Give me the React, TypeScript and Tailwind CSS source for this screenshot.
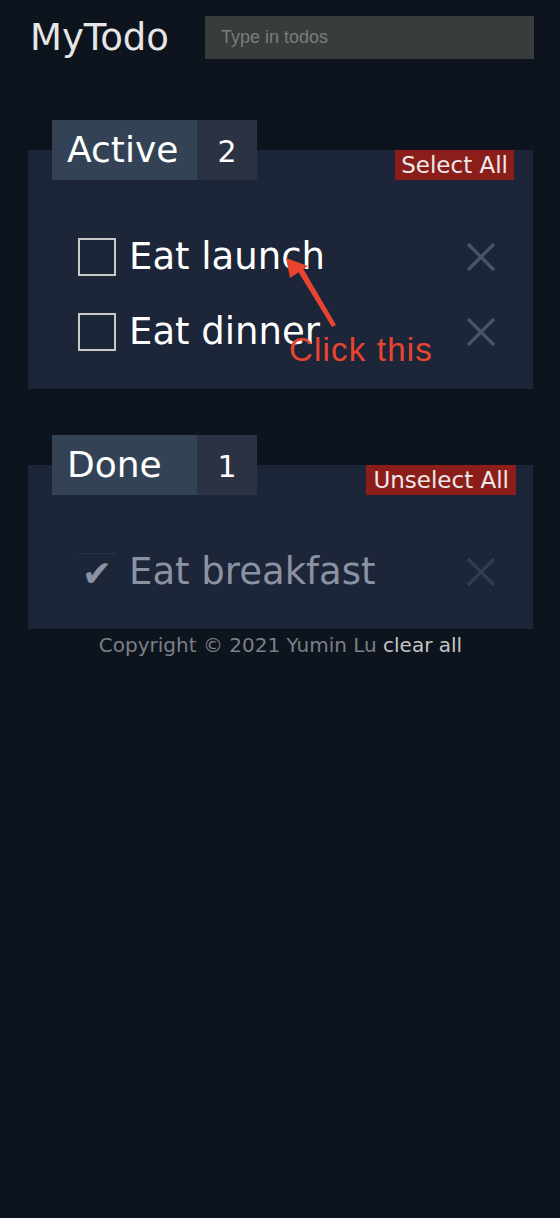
import React from "react";

const XIcon = ({ color }: { color: string }) => (
  <svg width="30" height="30" viewBox="0 0 30 30" fill="none">
    <line x1="2" y1="2" x2="28" y2="28" stroke={color} strokeWidth="3.2" />
    <line x1="28" y1="2" x2="2" y2="28" stroke={color} strokeWidth="3.2" />
  </svg>
);

function Tab({ label, count }: { label: string; count: number }) {
  return (
    <div className="relative z-10 ml-[24px] flex h-[60px] w-fit">
      <div className="flex w-[145px] items-center bg-[#334355] pl-[15px] text-[36px] leading-none text-white">
        {label}
      </div>
      <div className="flex w-[60px] items-center justify-center bg-[#2a3244] pt-[4px] text-[30px] leading-none text-white">
        {count}
      </div>
    </div>
  );
}

export default function App() {
  return (
    <div
      className="relative min-h-screen bg-[#0e141e]"
      style={{ fontFamily: '"DejaVu Sans", sans-serif' }}
    >
      <header className="flex items-center justify-between pl-[30px] pr-[26px] pt-[16px]">
        <h1 className="text-[37px] leading-none text-[#e6e6e6]">MyTodo</h1>
        <input
          placeholder="Type in todos"
          className="h-[43px] w-[329px] bg-[#393c3c] px-[16px] text-[18px] text-white outline-none placeholder:text-[#7b7d7d]"
          style={{ fontFamily: '"Liberation Sans", sans-serif' }}
        />
      </header>

      <main className="px-[28px] pt-[61px] pr-[27px]">
        <section>
          <Tab label="Active" count={2} />
          <div className="-mt-[30px] bg-[#1d2539]">
            <div className="flex h-[30px] justify-end pr-[19px]">
              <button className="h-[30px] bg-[#8b1d1a] px-[6px] text-[23px] leading-none text-[#f0e8e8]">
                Select All
              </button>
            </div>
            <ul className="pb-[20px] pl-[50px] pr-[37px] pt-[39px]">
              {["Eat launch", "Eat dinner"].map((t) => (
                <li key={t} className="flex h-[75px] items-center">
                  <span className="h-[38px] w-[38px] border-2 border-[#c9c9c9]" />
                  <span className="ml-[13px] flex-1 text-[37px] leading-none text-white">{t}</span>
                  <XIcon color="#4a5466" />
                </li>
              ))}
            </ul>
          </div>
        </section>

        <section className="mt-[46px]">
          <Tab label="Done" count={1} />
          <div className="-mt-[30px] bg-[#1d2539]">
            <div className="flex h-[30px] justify-end pr-[17px]">
              <button className="h-[30px] bg-[#8b1d1a] px-[7px] text-[23px] leading-none text-[#f0e8e8]">
                Unselect All
              </button>
            </div>
            <ul className="pb-[20px] pl-[50px] pr-[37px] pt-[39px]">
              <li className="flex h-[75px] items-center">
                <span className="flex h-[38px] w-[38px] items-center justify-center border-t border-[#2a3448] pt-[4px] text-[36px] leading-none text-[#8b93a3]">
                  ✔
                </span>
                <span className="ml-[13px] flex-1 text-[37px] leading-none text-[#8b93a3]">Eat breakfast</span>
                <XIcon color="#323c4f" />
              </li>
            </ul>
          </div>
        </section>

        <footer className="pt-[2px] text-center text-[20px] leading-[28px] text-[#7b7f87]">
          Copyright © 2021 Yumin Lu <span className="text-[#c4c4c4]">clear all</span>
        </footer>
      </main>

      <svg className="absolute left-0 top-0" width="560" height="400" viewBox="0 0 560 400">
        <polygon points="286,258 308,266 290,278" fill="#e94430" />
        <polygon points="296,268 301,265 336,325 332,327" fill="#e94430" />
      </svg>
      <span
        className="absolute left-[289px] top-[333px] text-[33px] leading-none tracking-[1.2px] text-[#e94430]"
        style={{ fontFamily: '"Liberation Sans", sans-serif' }}
      >
        Click this
      </span>
    </div>
  );
}
